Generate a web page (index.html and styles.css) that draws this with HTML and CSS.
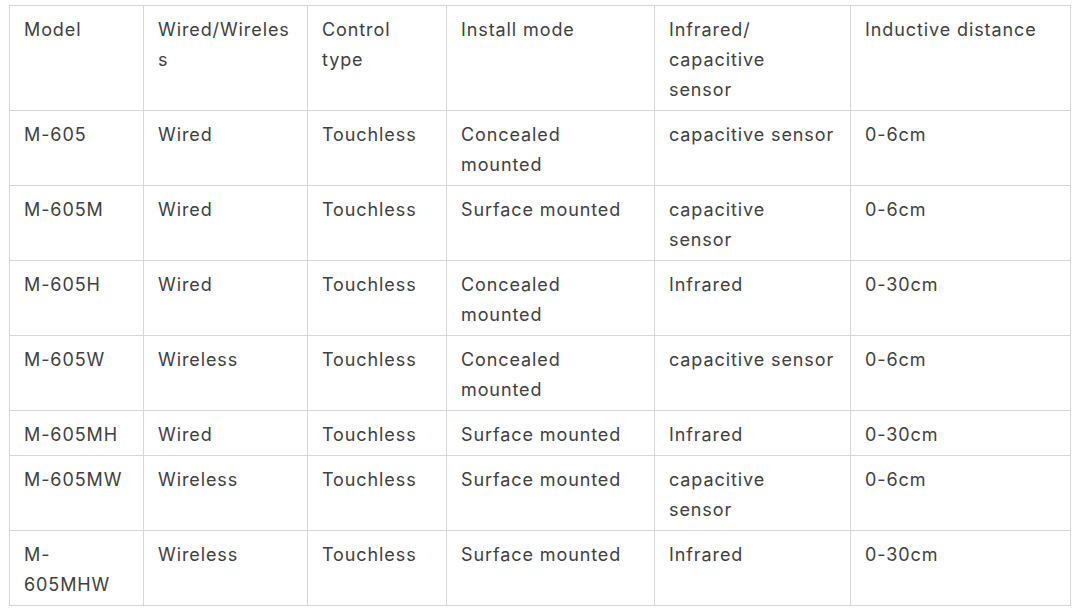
FILE: index.html
```html
<!DOCTYPE html>
<html>
<head>
<meta charset="utf-8">
<link rel="stylesheet" href="styles.css">
</head>
<body>
<div class="wrap">
<table class="spec">
<colgroup>
<col class="c1"><col class="c2"><col class="c3"><col class="c4"><col class="c5"><col class="c6">
</colgroup>
<tr><td>Model</td><td>Wired/Wireless</td><td>Control type</td><td>Install mode</td><td>Infrared/<br>capacitive<br>sensor</td><td>Inductive distance</td></tr>
<tr><td>M-605</td><td>Wired</td><td>Touchless</td><td>Concealed mounted</td><td>capacitive sensor</td><td>0-6cm</td></tr>
<tr><td>M-605M</td><td>Wired</td><td>Touchless</td><td>Surface mounted</td><td>capacitive<br>sensor</td><td>0-6cm</td></tr>
<tr><td>M-605H</td><td>Wired</td><td>Touchless</td><td>Concealed mounted</td><td>Infrared</td><td>0-30cm</td></tr>
<tr><td>M-605W</td><td>Wireless</td><td>Touchless</td><td>Concealed mounted</td><td>capacitive sensor</td><td>0-6cm</td></tr>
<tr><td>M-605MH</td><td>Wired</td><td>Touchless</td><td>Surface mounted</td><td>Infrared</td><td>0-30cm</td></tr>
<tr><td>M-605MW</td><td>Wireless</td><td>Touchless</td><td>Surface mounted</td><td>capacitive<br>sensor</td><td>0-6cm</td></tr>
<tr><td>M-605MHW</td><td>Wireless</td><td>Touchless</td><td>Surface mounted</td><td>Infrared</td><td>0-30cm</td></tr>
</table>
</div>
</body>
</html>
```
FILE: styles.css
```css
html, body { margin: 0; padding: 0; background: #fff; }
.wrap { padding: 5px 0 0 9px; }
.spec {
  border-collapse: collapse;
  table-layout: fixed;
  width: 1061px;
  font-family: Inter, "Liberation Sans", sans-serif;
  font-size: 18px;
  line-height: 30px;
  letter-spacing: 0.9px;
  color: #404040;
}
.spec td {
  border: 1px solid #d6d6d6;
  padding: 9px 15px 5px 14px;
  vertical-align: top;
  overflow-wrap: anywhere;
}
.c1 { width: 134px; }
.c2 { width: 164px; }
.c3 { width: 139px; }
.c4 { width: 208px; }
.c5 { width: 196px; }
.c6 { width: 220px; }
```
